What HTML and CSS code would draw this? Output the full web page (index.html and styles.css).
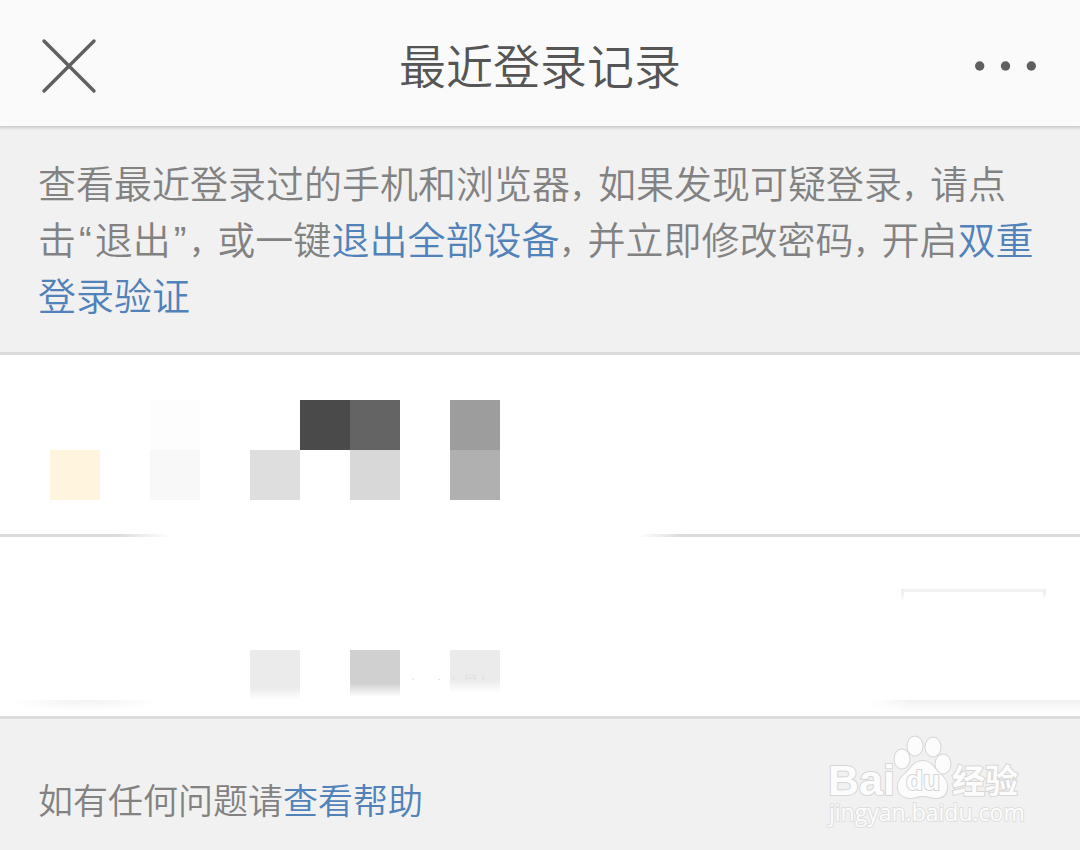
FILE: index.html
```html
<!DOCTYPE html>
<html lang="zh-CN">
<head>
<meta charset="utf-8">
<meta name="viewport" content="width=device-width, initial-scale=1">
<title>最近登录记录</title>
<link rel="stylesheet" href="styles.css">
</head>
<body>
<header class="topbar">
  <button class="icon-button" type="button" aria-label="关闭">
    <svg width="68" height="56" viewBox="0 0 68 56" fill="none" stroke="#606060" stroke-width="3.4" stroke-linecap="round"><path d="M4 3 54 53M54 3 4 53"/></svg>
  </button>
  <h1 class="title">最近登录记录</h1>
  <button class="icon-button" type="button" aria-label="更多">
    <svg width="68" height="12" viewBox="0 0 68 12" fill="#606060"><circle cx="7.7" cy="6" r="4.7"/><circle cx="33.5" cy="6" r="4.7"/><circle cx="59.3" cy="6" r="4.7"/></svg>
  </button>
</header>
<main class="content">
  <p class="intro">查看最近登录过的手机和浏览器<span class="comma">，</span>如果发现可疑登录<span class="comma">，</span>请点击<span class="quote">“</span>退出<span class="quote">”</span><span class="comma">，</span>或一键<a class="link" href="#logout">退出全部设备</a><span class="comma">，</span>并立即修改密码<span class="comma">，</span>开启<a class="link" href="#verify">双重登录验证</a></p>
  <ul class="devices">
    <li class="device device-faded">
      <svg class="mosaic" width="600" height="179" viewBox="0 0 600 179" shape-rendering="crispEdges" aria-hidden="true">
        <rect x="50" y="95" width="50" height="50" fill="#fff4dd"/>
        <rect x="150" y="45" width="50" height="50" fill="#fdfdfd"/>
        <rect x="150" y="95" width="50" height="50" fill="#f8f8f8"/>
        <rect x="250" y="95" width="50" height="50" fill="#dedede"/>
        <rect x="300" y="45" width="50" height="50" fill="#4a4a4a"/>
        <rect x="350" y="45" width="50" height="50" fill="#646464"/>
        <rect x="350" y="95" width="50" height="50" fill="#d8d8d8"/>
        <rect x="450" y="45" width="50" height="50" fill="#9d9d9d"/>
        <rect x="450" y="95" width="50" height="50" fill="#b0b0b0"/>
      </svg>
    </li>
    <li class="device">
      <svg class="mosaic" width="600" height="179" viewBox="0 0 600 179" aria-hidden="true">
        <defs>
          <linearGradient id="low" x2="0" y2="1"><stop offset=".75" stop-color="#ebebeb"/><stop offset="1" stop-color="#fff"/></linearGradient>
          <linearGradient id="mid" x2="0" y2="1"><stop offset=".66" stop-color="#d0d0d0"/><stop offset=".94" stop-color="#fff"/></linearGradient>
          <linearGradient id="high" x2="0" y2="1"><stop offset=".6" stop-color="#ebebeb"/><stop offset=".86" stop-color="#fff"/></linearGradient>
          <radialGradient id="shade" cy="0" r=".5" gradientTransform="matrix(1 0 0 2 0 0)"><stop offset="0" stop-color="#f2f2f2"/><stop offset="1" stop-color="#fff"/></radialGradient>
        </defs>
        <rect x="250" y="113" width="50" height="50" fill="url(#low)"/>
        <rect x="350" y="113" width="50" height="50" fill="url(#mid)"/>
        <rect x="450" y="113" width="50" height="50" fill="url(#high)"/>
        <path d="M466 143v-5h9v5M466 141h9M483 138v5M455 140l-3 3M440 142l-2 1M412 142h2" fill="none" stroke="#dedede" stroke-width="1"/>
        <rect x="10" y="163" width="150" height="12" fill="url(#shade)"/>
      </svg>
      <svg class="mosaic" width="210" height="179" viewBox="0 0 210 179" aria-hidden="true">
        <defs>
          <linearGradient id="edge" x2="0" y2="1"><stop stop-color="#ececec"/><stop offset="1" stop-color="#fff"/></linearGradient>
          <linearGradient id="corner"><stop stop-color="#fff"/><stop offset=".2" stop-color="#fff" stop-opacity="0"/></linearGradient>
        </defs>
        <path d="M31 52h145v3H31z" fill="#f2f2f2"/>
        <path d="M31 52h3v14h-3zM173 52h3v8h-3z" fill="url(#edge)"/>
        <path d="M0 163h210v13H0z" fill="url(#edge)" opacity=".75"/>
        <path d="M0 163h210v13H0z" fill="url(#corner)"/>
      </svg>
    </li>
  </ul>
</main>
<footer class="help">
  <p class="help-text">如有任何问题请<a class="link" href="#help">查看帮助</a></p>
  <svg class="watermark" width="210" height="96" viewBox="0 0 210 96" role="img" aria-label="Baidu 经验">
    <g class="mark">
      <text class="brand" x="2" y="62">Bai</text>
      <ellipse cx="76" cy="26" rx="7.5" ry="9.5"/>
      <ellipse cx="89" cy="13" rx="7.5" ry="9.5"/>
      <ellipse cx="107" cy="14" rx="7.5" ry="9.5"/>
      <ellipse cx="117" cy="31" rx="7.5" ry="9.5"/>
      <path d="M97 28c-9 0-12 7-17 12-5 4-8 8-8 14 0 7 5 11 12 11 5 0 8-2 13-2s8 2 13 2c7 0 11-4 11-11 0-6-3-10-8-14-5-5-8-12-16-12z"/>
      <text class="paw-text" x="80" y="57">du</text>
      <text class="brand-cn" x="126" y="60">经验</text>
      <text class="site" x="3" y="88">jingyan.baidu.com</text>
    </g>
  </svg>
</footer>
</body>
</html>
```
FILE: styles.css
```css
* {
  box-sizing: border-box;
}

body {
  margin: 0;
  min-height: 100vh;
  display: flex;
  flex-direction: column;
  background: #f1f1f1;
  color: #828282;
  font-family: "Noto Sans CJK SC", sans-serif;
  font-weight: 350;
}

.topbar {
  display: flex;
  align-items: center;
  justify-content: space-between;
  padding: 28px 40px 26px;
  background: #fafafa;
  box-shadow: 0 1px 3px 1px #c8c8c8;
}

.icon-button {
  width: 68px;
  height: 76px;
  margin-bottom: -4px;
  padding: 0;
  border: 0;
  background: none;
  display: flex;
  align-items: center;
  justify-content: center;
}

.title {
  margin: 0;
  color: #555;
  font-size: 47px;
  line-height: 72px;
  font-weight: 350;
}

.intro {
  margin: 0;
  padding: 28px 38px 30px;
  font-size: 38px;
  line-height: 56px;
}

.comma {
  font-size: 28px;
  font-weight: 500;
  line-height: 1;
}

.quote {
  padding: 0 3px;
  font-family: "Liberation Sans", sans-serif;
  line-height: 1;
}

.link {
  color: #5182ba;
  text-decoration: none;
}

.devices {
  margin: 0;
  padding: 0;
  list-style: none;
  background: #fff;
  border-top: 3px solid #dcdcdc;
}

.device {
  display: flex;
  justify-content: space-between;
  border-bottom: 3px solid #dcdcdc;
}

.device-faded {
  border-image: linear-gradient(to right, #dcdcdc 11%, #fff 16%, #fff 59%, #dcdcdc 63%) 3;
}

.mosaic {
  display: block;
}

.help {
  position: relative;
  flex: 1;
  padding: 54px 38px 20px;
}

.help-text {
  margin: 0;
  font-size: 35px;
  line-height: 52px;
}

.watermark {
  position: absolute;
  right: 44px;
  top: 14px;
}

.mark {
  fill: #fcfcfc;
  stroke: #d6d6d6;
  stroke-width: 2px;
  paint-order: stroke;
}

.brand {
  font: bold 43px "Liberation Sans", sans-serif;
}

.paw-text {
  font: bold 28px "Liberation Sans", sans-serif;
}

.brand-cn {
  font: bold 33px "Noto Sans CJK SC", sans-serif;
}

.site {
  font: 23px "Open Sans", sans-serif;
  stroke: #dedede;
}
```
